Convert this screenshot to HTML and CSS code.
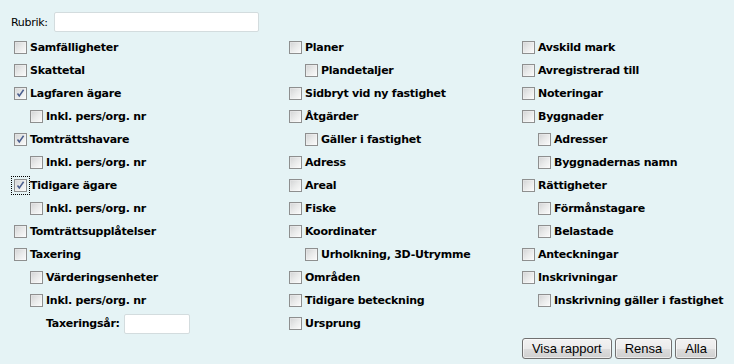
FILE: index.html
```html
<!DOCTYPE html>
<html lang="sv">
<head>
<meta charset="utf-8">
<title>Rapport</title>
<link rel="stylesheet" href="styles.css">
</head>
<body>
<form class="page">
  <div class="head">
    <label class="lbl" for="rubrik">Rubrik:</label>
    <input class="txt wide" id="rubrik" type="text">
  </div>
  <div class="cols">
    <div class="col">
      <label class="row"><input type="checkbox"><span>Samfälligheter</span></label>
      <label class="row"><input type="checkbox"><span>Skattetal</span></label>
      <label class="row"><input type="checkbox" checked><span>Lagfaren ägare</span></label>
      <label class="row sub"><input type="checkbox"><span>Inkl. pers/org. nr</span></label>
      <label class="row"><input type="checkbox" checked><span>Tomträttshavare</span></label>
      <label class="row sub"><input type="checkbox"><span>Inkl. pers/org. nr</span></label>
      <label class="row"><input type="checkbox" class="focus" checked><span>Tidigare ägare</span></label>
      <label class="row sub"><input type="checkbox"><span>Inkl. pers/org. nr</span></label>
      <label class="row"><input type="checkbox"><span>Tomträttsupplåtelser</span></label>
      <label class="row"><input type="checkbox"><span>Taxering</span></label>
      <label class="row sub"><input type="checkbox"><span>Värderingsenheter</span></label>
      <label class="row sub"><input type="checkbox"><span>Inkl. pers/org. nr</span></label>
      <div class="row year"><span>Taxeringsår:</span><input class="txt short" type="text"></div>
    </div>
    <div class="col">
      <label class="row"><input type="checkbox"><span>Planer</span></label>
      <label class="row sub"><input type="checkbox"><span>Plandetaljer</span></label>
      <label class="row"><input type="checkbox"><span>Sidbryt vid ny fastighet</span></label>
      <label class="row"><input type="checkbox"><span>Åtgärder</span></label>
      <label class="row sub"><input type="checkbox"><span>Gäller i fastighet</span></label>
      <label class="row"><input type="checkbox"><span>Adress</span></label>
      <label class="row"><input type="checkbox"><span>Areal</span></label>
      <label class="row"><input type="checkbox"><span>Fiske</span></label>
      <label class="row"><input type="checkbox"><span>Koordinater</span></label>
      <label class="row sub"><input type="checkbox"><span>Urholkning, 3D-Utrymme</span></label>
      <label class="row"><input type="checkbox"><span>Områden</span></label>
      <label class="row"><input type="checkbox"><span>Tidigare beteckning</span></label>
      <label class="row"><input type="checkbox"><span>Ursprung</span></label>
    </div>
    <div class="col">
      <label class="row"><input type="checkbox"><span>Avskild mark</span></label>
      <label class="row"><input type="checkbox"><span>Avregistrerad till</span></label>
      <label class="row"><input type="checkbox"><span>Noteringar</span></label>
      <label class="row"><input type="checkbox"><span>Byggnader</span></label>
      <label class="row sub"><input type="checkbox"><span>Adresser</span></label>
      <label class="row sub"><input type="checkbox"><span>Byggnadernas namn</span></label>
      <label class="row"><input type="checkbox"><span>Rättigheter</span></label>
      <label class="row sub"><input type="checkbox"><span>Förmånstagare</span></label>
      <label class="row sub"><input type="checkbox"><span>Belastade</span></label>
      <label class="row"><input type="checkbox"><span>Anteckningar</span></label>
      <label class="row"><input type="checkbox"><span>Inskrivningar</span></label>
      <label class="row sub"><input type="checkbox"><span>Inskrivning gäller i fastighet</span></label>
    </div>
  </div>
  <div class="actions">
    <button type="button" class="btn">Visa rapport</button>
    <button type="button" class="btn">Rensa</button>
    <button type="button" class="btn">Alla</button>
  </div>
</form>
</body>
</html>
```

FILE: styles.css
```css
html, body {
  margin: 0;
  padding: 0;
  background: #e5f3f5;
}
body {
  width: 734px;
  height: 364px;
  overflow: hidden;
  font-family: "DejaVu Sans", Verdana, sans-serif;
  font-size: 11px;
  color: #000;
}
.page {
  margin: 0;
  padding: 12px 17px 0 11px;
}
.head {
  display: flex;
  align-items: center;
  height: 20px;
}
.lbl {
  letter-spacing: -0.3px;
  margin-right: 6px;
  padding-top: 1px;
}
.txt {
  box-sizing: border-box;
  height: 20px;
  background: #fff;
  border: 1px solid #d3dcde;
  border-radius: 2px;
  margin: 0;
  padding: 0 3px;
  font: inherit;
}
.wide { width: 205px; }
.short { width: 66px; margin-left: 4px; }

.cols {
  display: grid;
  grid-template-columns: 275px 233px 1fr;
  margin-top: 4px;
  padding-left: 3px;
}
.col {
  display: flex;
  flex-direction: column;
}
.row {
  display: flex;
  align-items: center;
  height: 23px;
  font-weight: bold;
  letter-spacing: -0.25px;
  white-space: nowrap;
}
.row.sub { padding-left: 16px; }
.row.year { padding-left: 32px; }

.row input[type="checkbox"] {
  appearance: none;
  -webkit-appearance: none;
  box-sizing: border-box;
  width: 13px;
  height: 13px;
  margin: 0 3px 0 0;
  flex: none;
  border: 1px solid #8e8f8f;
  background: linear-gradient(135deg, #d2d3d4 0%, #e9eaea 50%, #fbfbfb 100%);
  box-shadow: inset 0 0 0 1px rgba(255,255,255,0.25);
}
.row input[type="checkbox"]:checked {
  background:
    url("data:image/svg+xml,%3Csvg xmlns='http://www.w3.org/2000/svg' width='11' height='11' viewBox='0 0 11 11'%3E%3Cpath d='M2.5 5.5 L4.3 8 L8.6 1.8' fill='none' stroke='%234a5e8e' stroke-width='1.5'/%3E%3C/svg%3E") center / 11px 11px no-repeat,
    linear-gradient(135deg, #d2d3d4 0%, #e9eaea 50%, #fbfbfb 100%);
}
.row input.focus {
  outline: 1px dotted #000;
  outline-offset: 2px;
}

.actions {
  display: flex;
  justify-content: flex-end;
  gap: 3px;
  margin-top: 3px;
}
.btn {
  box-sizing: border-box;
  height: 21px;
  margin: 0;
  padding: 0 9px;
  font-family: "Liberation Sans", Arial, sans-serif;
  font-size: 13px;
  color: #000;
  border: 1px solid #707070;
  border-radius: 3px;
  background: linear-gradient(#f2f2f2 0%, #ebebeb 50%, #dddddd 51%, #cfcfcf 100%);
  box-shadow: inset 0 0 0 1px rgba(255,255,255,0.6);
}
```
